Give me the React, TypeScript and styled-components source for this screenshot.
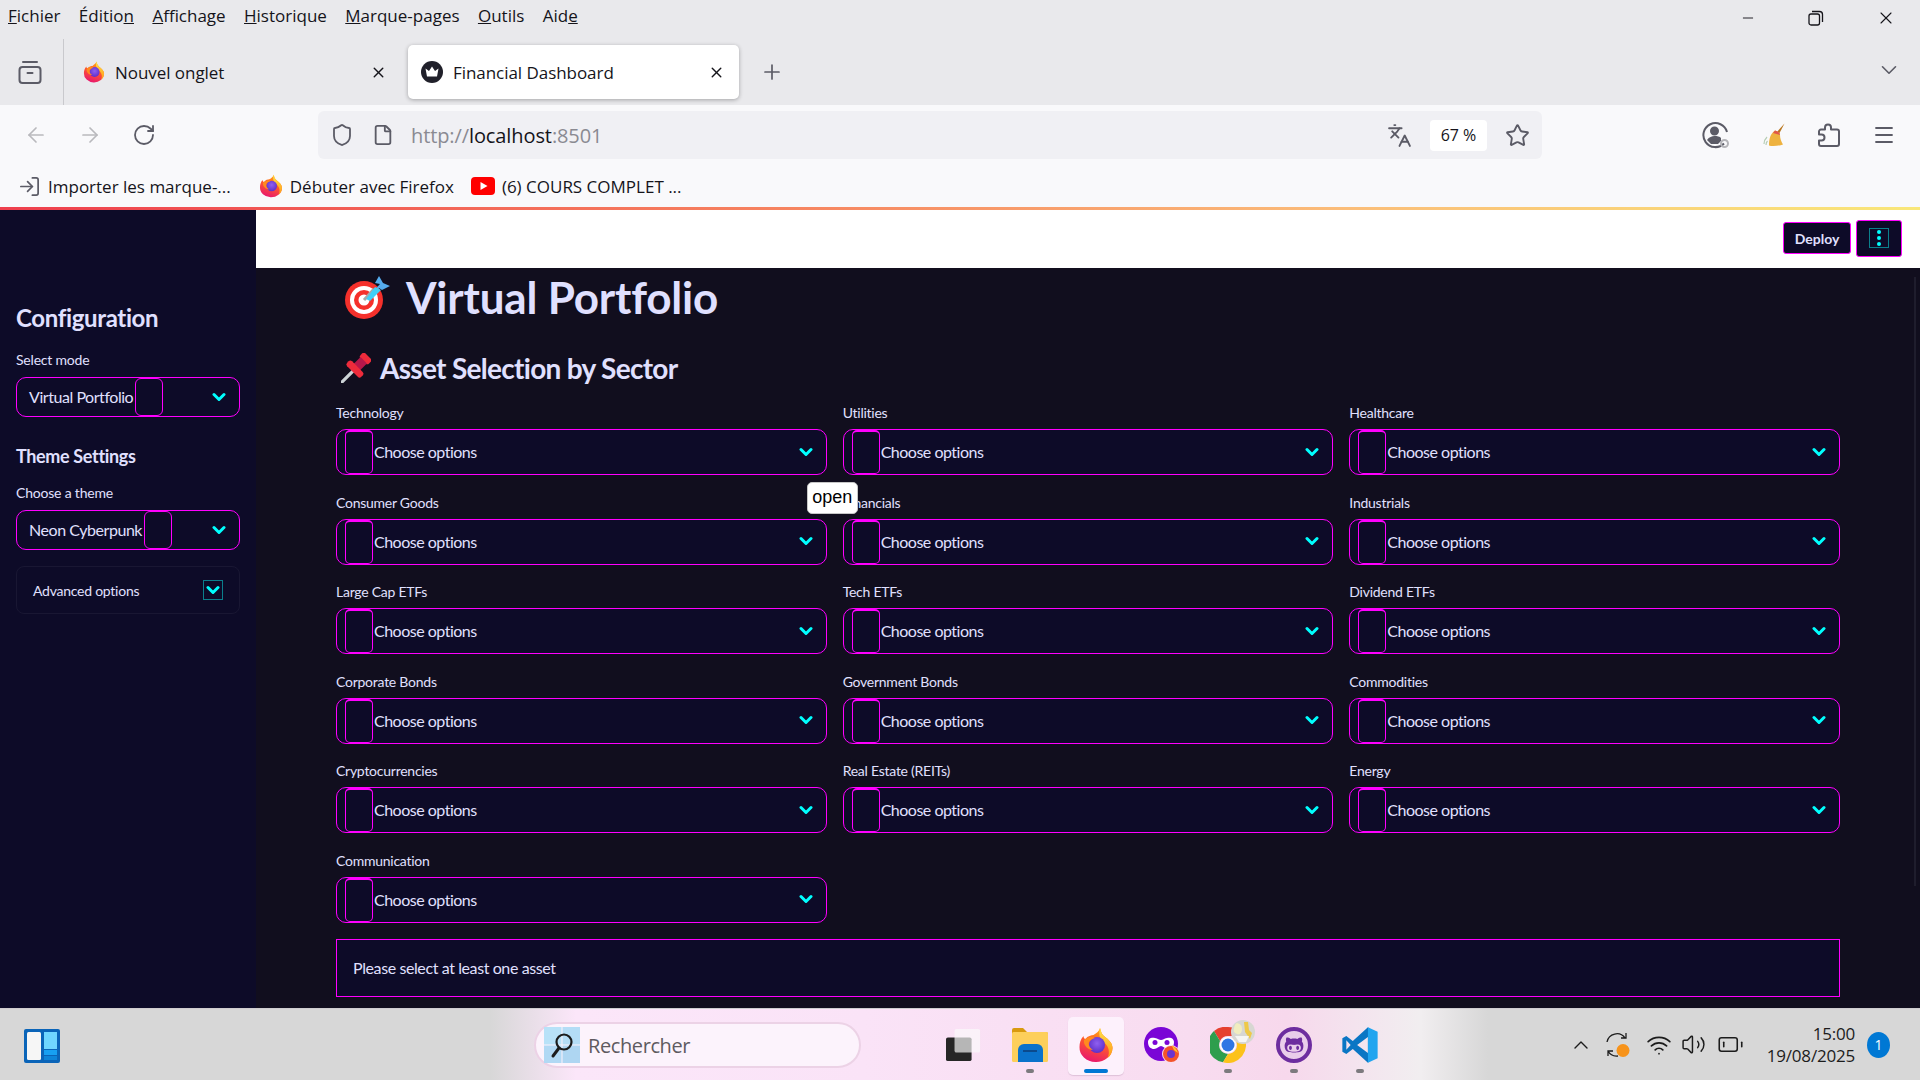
import React from 'react';
import styled, { createGlobalStyle } from 'styled-components';
import {
  ArrowLeft,
  ArrowRight,
  BatteryLow,
  ChevronDown,
  ChevronUp,
  File,
  Languages,
  LogIn,
  Menu,
  Minus,
  Plus,
  RotateCw,
  Shield,
  Star,
  Volume2,
  Wifi,
  X,
} from 'lucide-react';
import { FaGithubAlt } from 'react-icons/fa';

const SECTORS = [
  'Technology',
  'Utilities',
  'Healthcare',
  'Consumer Goods',
  'Financials',
  'Industrials',
  'Large Cap ETFs',
  'Tech ETFs',
  'Dividend ETFs',
  'Corporate Bonds',
  'Government Bonds',
  'Commodities',
  'Cryptocurrencies',
  'Real Estate (REITs)',
  'Energy',
  'Communication',
];

const MENU: [string, string, string][] = [
  ['', 'F', 'ichier'],
  ['Éditio', 'n', ''],
  ['', 'A', 'ffichage'],
  ['', 'H', 'istorique'],
  ['', 'M', 'arque-pages'],
  ['', 'O', 'utils'],
  ['Aid', 'e', ''],
];

const GlobalStyle = createGlobalStyle`
  html, body {
    margin: 0;
    padding: 0;
    overflow: hidden;
    background: #110e1e;
  }
`;

const Page = styled.div`
  width: 1920px;
  height: 1080px;
  display: flex;
  flex-direction: column;
  overflow: hidden;
  font-family: 'Open Sans', 'Noto Sans', sans-serif;
  color: #15141a;
`;

const MenuBar = styled.div`
  height: 33px;
  flex: none;
  box-sizing: border-box;
  display: flex;
  align-items: center;
  padding: 0 24px 2px 8px;
  background: #e9e9ec;
  font-size: 17px;
  gap: 18.4px;
`;

const MenuItem = styled.span`
  white-space: nowrap;
`;

const WindowButtons = styled.div`
  margin-left: auto;
  display: flex;
  align-items: center;
  gap: 52px;
  padding-top: 5px;
`;

const TabStrip = styled.div`
  height: 72px;
  flex: none;
  box-sizing: border-box;
  display: flex;
  align-items: flex-start;
  background: #e9e9ec;
  padding: 12px 18px 0 18px;
`;

const ArchiveSlot = styled.div`
  width: 24px;
  height: 24px;
  margin-top: 15px;
`;

const TabDivider = styled.div`
  width: 1px;
  height: 66px;
  margin: -6px 6px 0 21px;
  background: #c9c9cd;
`;

const Tab = styled.div<{ $active?: boolean }>`
  width: 331px;
  height: 54px;
  box-sizing: border-box;
  display: flex;
  align-items: center;
  gap: 10px;
  padding: 0 14px 0 13px;
  border-radius: 5px;
  font-size: 17px;
  letter-spacing: -0.05px;
  margin-right: 7px;
  background: ${({ $active }) => ($active ? '#ffffff' : 'transparent')};
  box-shadow: ${({ $active }) => ($active ? '0 1px 4px rgba(0,0,0,.3)' : 'none')};
`;

const TabTitle = styled.span`
  flex: 1;
  white-space: nowrap;
`;

const NewTab = styled.div`
  margin: 15px 0 0 14px;
  display: flex;
  color: #5b5b66;
`;

const TabsMenu = styled.div`
  margin: 12px 0 0 auto;
  display: flex;
  color: #5b5b66;
`;

const NavBar = styled.div`
  height: 60px;
  flex: none;
  box-sizing: border-box;
  display: flex;
  align-items: center;
  background: #f9f9fb;
  padding: 0 24px;
  color: #5b5b66;
`;

const NavButtons = styled.div`
  display: flex;
  align-items: center;
  gap: 30px;
  width: 294px;
`;

const NavIcon = styled.div<{ $disabled?: boolean }>`
  display: flex;
  color: ${({ $disabled }) => ($disabled ? '#b9b9bd' : '#5b5b66')};
`;

const UrlBar = styled.div`
  width: 1224px;
  height: 48px;
  box-sizing: border-box;
  display: flex;
  align-items: center;
  padding: 0 12px;
  border-radius: 6px;
  background: #f0f0f4;
  gap: 18px;
`;

const UrlText = styled.div`
  flex: 1;
  font-size: 20px;
  letter-spacing: -0.1px;
  color: #8a8a92;
  margin-left: -1px;
`;

const UrlHost = styled.span`
  color: #15141a;
`;

const ZoomPill = styled.div`
  width: 57px;
  height: 31px;
  display: flex;
  align-items: center;
  justify-content: center;
  background: #fff;
  border-radius: 4px;
  font-size: 16px;
  color: #15141a;
`;

const ToolIcons = styled.div`
  margin-left: auto;
  display: flex;
  align-items: center;
  gap: 32px;
`;

const Bookmarks = styled.div`
  height: 42px;
  flex: none;
  box-sizing: border-box;
  display: flex;
  align-items: center;
  background: #f9f9fb;
  padding: 0 0 0 18px;
  font-size: 17px;
  letter-spacing: 0;
`;

const Bookmark = styled.div<{ $after?: number }>`
  display: flex;
  align-items: center;
  gap: 7px;
  margin-right: ${({ $after }) => $after ?? 0}px;
  white-space: nowrap;
`;

const ColorLine = styled.div`
  height: 3px;
  flex: none;
  background: linear-gradient(90deg, #ee3f4d 0%, #f6825f 40%, #fbbd79 70%, #f9e779 100%);
`;

const Content = styled.div`
  flex: 1;
  min-height: 0;
  display: flex;
  font-family: Lato, 'Noto Sans', sans-serif;
  color: #e0e0ff;
`;

const Sidebar = styled.aside`
  width: 256px;
  flex: none;
  box-sizing: border-box;
  background: #0d0b28;
  padding: 92px 16px 0;
`;

const SideTitle = styled.h2`
  margin: 0;
  font-size: 24px;
  line-height: 32px;
  font-weight: 700;
  letter-spacing: -0.35px;
`;

const SideHeading = styled.h3`
  margin: 26px 0 13px;
  font-size: 18px;
  line-height: 26px;
  font-weight: 700;
  letter-spacing: -0.35px;
`;

const SideLabel = styled.div<{ $top?: number }>`
  font-size: 14px;
  line-height: 22px;
  height: 23px;
  letter-spacing: -0.2px;
  margin: ${({ $top }) => $top ?? 0}px 0 5px;
`;

const SideSelect = styled.div`
  height: 40px;
  box-sizing: border-box;
  display: flex;
  align-items: stretch;
  border: 1px solid #ff00ff;
  border-radius: 10px;
  padding-left: 12px;
  padding-right: 13px;
  font-size: 16px;
  letter-spacing: -0.45px;
  white-space: nowrap;
`;

const SelectValue = styled.span`
  align-self: center;
  margin-top: -1px;
`;

const InnerBox = styled.span`
  width: 28px;
  box-sizing: border-box;
  border: 1px solid #ff00ff;
  border-radius: 6px;
  margin-left: 2px;
  flex: none;
`;

const Arrow = styled.span`
  margin-left: auto;
  align-self: center;
  display: flex;
  color: #00ffff;
  margin-top: -1px;
`;

const Advanced = styled.div`
  margin-top: 16px;
  height: 48px;
  box-sizing: border-box;
  display: flex;
  align-items: center;
  justify-content: space-between;
  padding: 0 16px;
  border: 1px solid #191733;
  border-radius: 8px;
  font-size: 14px;
  letter-spacing: -0.25px;
`;

const AdvancedToggle = styled.span`
  width: 20px;
  height: 20px;
  box-sizing: border-box;
  display: flex;
  align-items: center;
  justify-content: center;
  border: 1px solid #0b7f8c;
  color: #00ffff;
`;

const Main = styled.main`
  flex: 1;
  min-width: 0;
  display: flex;
  flex-direction: column;
  position: relative;
  background: #110e1e;
`;

const Header = styled.header`
  height: 58px;
  flex: none;
  box-sizing: border-box;
  display: flex;
  align-items: center;
  justify-content: flex-end;
  gap: 5px;
  padding: 0 18px 2px 0;
  background: #fff;
`;

const DeployButton = styled.button`
  width: 68px;
  height: 32px;
  box-sizing: border-box;
  border: 1px solid #ff00ff;
  border-radius: 3px;
  background: #0d0b28;
  color: #e0e0ff;
  font: 700 14px Lato, sans-serif;
  padding: 0;
`;

const KebabButton = styled.button`
  width: 46px;
  height: 37px;
  box-sizing: border-box;
  border: 1px solid #ff00ff;
  border-radius: 3px;
  background: #0d0b28;
  display: flex;
  align-items: center;
  justify-content: center;
  padding: 0;
`;

const KebabInner = styled.span`
  width: 20px;
  height: 20px;
  box-sizing: border-box;
  display: flex;
  flex-direction: column;
  align-items: center;
  justify-content: center;
  gap: 2px;
  border: 1px solid #0b7f8c;
`;

const KebabDot = styled.i`
  width: 4px;
  height: 4px;
  border-radius: 50%;
  background: #00ffff;
`;

const Body = styled.div`
  padding: 0 80px;
`;

const TitleRow = styled.div`
  height: 58px;
  box-sizing: border-box;
  display: flex;
  align-items: center;
  gap: 15px;
  padding: 0 0 1px 9px;
`;

const Title = styled.h1`
  margin: 0;
  font-size: 44px;
  font-weight: 700;
  letter-spacing: -0.2px;
  white-space: nowrap;
`;

const SectionRow = styled.div`
  height: 40px;
  margin-top: 22px;
  display: flex;
  align-items: center;
  gap: 9px;
  padding-left: 5px;
`;

const SectionTitle = styled.h2`
  margin: 0;
  font-size: 28px;
  font-weight: 700;
  letter-spacing: -0.7px;
  white-space: nowrap;
`;

const AssetGrid = styled.div`
  margin-top: 14px;
  display: grid;
  grid-template-columns: repeat(3, 1fr);
  column-gap: 16px;
  row-gap: 16.6px;
`;

const Field = styled.div`
  position: relative;
`;

const FieldLabel = styled.div`
  height: 27px;
  line-height: 21px;
  font-size: 14px;
  letter-spacing: -0.25px;
`;

const MultiSelect = styled.div`
  height: 46px;
  box-sizing: border-box;
  display: flex;
  align-items: stretch;
  padding: 0 13px 0 8px;
  border: 1px solid #ff00ff;
  border-radius: 10px;
  background: #0d0b28;
  font-size: 16px;
  letter-spacing: -0.5px;
`;

const GhostBox = styled.span`
  width: 28px;
  flex: none;
  box-sizing: border-box;
  border: 1px solid #ff00ff;
  border-top-width: 2px;
  border-radius: 5px;
`;

const Placeholder = styled.span`
  align-self: center;
  margin: -1px 0 0 1px;
`;

const Tooltip = styled.div`
  position: absolute;
  left: -36px;
  top: -10px;
  width: 51px;
  height: 32px;
  box-sizing: border-box;
  display: flex;
  align-items: center;
  justify-content: center;
  background: #fff;
  border: 1px solid #c6c6c6;
  border-radius: 5px;
  color: #000;
  font: 18px 'Liberation Sans', sans-serif;
`;

const Alert = styled.div`
  margin-top: 16px;
  height: 58px;
  box-sizing: border-box;
  display: flex;
  align-items: center;
  padding-left: 16px;
  border: 1px solid #ff00ff;
  background: #0d0b28;
  font-size: 16px;
  letter-spacing: -0.4px;
`;

const Scrollbar = styled.div`
  position: absolute;
  right: 4px;
  top: 67px;
  width: 2px;
  height: 609px;
  background: #1f1d2d;
`;

const Taskbar = styled.footer`
  height: 72px;
  flex: none;
  box-sizing: border-box;
  display: flex;
  align-items: flex-start;
  padding: 0 30px 0 24px;
  border-top: 1px solid #cfcdd0;
  background: linear-gradient(
    90deg,
    #d7d7d7 0%,
    #d7d7d7 25.5%,
    #fbe6f9 30%,
    #fae3f7 45%,
    #f8dcf0 62%,
    #f7d8ec 67%,
    #f1eef0 74%,
    #d7d7d7 77.5%,
    #d7d7d7 100%
  );
  font-family: 'Open Sans', sans-serif;
`;

const StartSlot = styled.div`
  width: 36px;
  height: 34px;
  margin-top: 20px;
`;

const SearchBox = styled.div`
  width: 327px;
  height: 46px;
  margin: 13px 70px 0 474px;
  box-sizing: border-box;
  display: flex;
  align-items: center;
  gap: 8px;
  padding-left: 8px;
  border: 2px solid #ecd2e6;
  border-radius: 23px;
  background: #fcf3fc;
  font-size: 20px;
  letter-spacing: -0.4px;
  color: #5e5a60;
`;

const TaskSlot = styled.div<{ $active?: boolean }>`
  position: relative;
  width: 66px;
  height: 71px;
  display: flex;
  flex-direction: column;
  align-items: center;
  padding-top: 18px;
  box-sizing: border-box;

  &::before {
    content: '';
    position: absolute;
    left: 5px;
    right: 5px;
    top: 8px;
    bottom: 5px;
    border-radius: 5px;
    background: ${({ $active }) => ($active ? '#fdf1fc' : 'transparent')};
    box-shadow: ${({ $active }) => ($active ? '0 1px 1px rgba(120,80,120,.2)' : 'none')};
  }
`;

const TaskIcon = styled.div`
  position: relative;
  width: 36px;
  height: 36px;
  display: flex;
  align-items: center;
  justify-content: center;
`;

const TaskDot = styled.div<{ $active?: boolean; $off?: boolean }>`
  position: relative;
  margin-top: 6px;
  width: ${({ $active }) => ($active ? 24 : 8)}px;
  height: 4px;
  border-radius: 2px;
  background: ${({ $active, $off }) => ($off ? 'transparent' : $active ? '#0078d4' : '#7c7a7e')};
`;

const GithubCircle = styled.div`
  width: 36px;
  height: 36px;
  box-sizing: border-box;
  border-radius: 50%;
  border: 4px solid #6d2d9f;
  background: #e9cdea;
  color: #6d2d9f;
  display: flex;
  align-items: center;
  justify-content: center;
`;

const OverlayBlob = styled.div`
  position: absolute;
  right: -9px;
  top: -7px;
`;

const Tray = styled.div`
  margin-left: auto;
  height: 71px;
  display: flex;
  align-items: center;
  gap: 11px;
  color: #1c1c1c;
`;

const TrayIcon = styled.span<{ $shift?: number }>`
  display: flex;
  margin-left: ${({ $shift }) => $shift ?? 0}px;
`;

const Clock = styled.div`
  margin-left: 12px;
  text-align: right;
  font-size: 17px;
  line-height: 22px;
  letter-spacing: -0.2px;
  white-space: nowrap;
`;

const Badge = styled.div`
  width: 23px;
  height: 26px;
  margin-left: 1px;
  border-radius: 50%;
  background: #0078d4;
  color: #fff;
  font-size: 14px;
  display: flex;
  align-items: center;
  justify-content: center;
`;

const Chevron = () => (
  <svg width="14" height="10" viewBox="0 0 14 10" fill="none" stroke="currentColor" strokeWidth="3" strokeLinecap="round" strokeLinejoin="round">
    <path d="M2 2.500 7 7.500 12 2.500" />
  </svg>
);

const RestoreIcon = () => (
  <svg width="16" height="16" viewBox="0 0 16 16" fill="none" stroke="#15141a" strokeWidth="1.3">
    <rect x="1" y="4" width="10.5" height="11" rx="2" />
    <path d="M4 1.500h7.500A3 3 0 0 1 14.500 4.500V12" />
  </svg>
);

const ArchiveIcon = () => (
  <svg width="24" height="24" viewBox="0 0 24 24" fill="none" stroke="#5b5b66" strokeWidth="2" strokeLinecap="round">
    <rect x="1.500" y="7" width="21" height="16" rx="3" />
    <path d="M5 2h14M9.500 13h5" />
  </svg>
);

const FirefoxIcon = ({ size = 24 }: { size?: number }) => (
  <svg width={size} height={size} viewBox="0 0 36 36">
    <defs>
      <linearGradient id="ffBase" x1="0.7" y1="0" x2="0.35" y2="1">
        <stop offset="0" stopColor="#ffb30f" />
        <stop offset="0.45" stopColor="#ff5a2b" />
        <stop offset="1" stopColor="#e8166f" />
      </linearGradient>
      <linearGradient id="ffFlame" x1="0.5" y1="0" x2="0.5" y2="1">
        <stop offset="0" stopColor="#ffe14a" />
        <stop offset="1" stopColor="#ff9a16" />
      </linearGradient>
      <radialGradient id="ffGlobe" cx="0.5" cy="0.4" r="0.65">
        <stop offset="0" stopColor="#8f60f0" />
        <stop offset="1" stopColor="#5a2bc4" />
      </radialGradient>
    </defs>
    <path d="M22 1c1 3 1 5 4 8 5 4 8.500 7 8.500 12A16.500 14.500 0 0 1 1.500 20c0-4 1-8 4-11 0 2 1 3 2 3 2-3 6-4 8-4 3-2 6-4 6.500-7Z" fill="url(#ffBase)" />
    <path d="M22 1c1 3 1 5 4 8 5 4 8.500 7 8.500 12 0 4-2 8-5 10 2-4 2-9-1-13-2-3-6-5-7-9-.5-3 0-6 .5-8Z" fill="url(#ffFlame)" />
    <circle cx="19" cy="18" r="8" fill="url(#ffGlobe)" />
    <path d="M6 13c3-3 8-4 11-2-3 1-5 2-6 4-1 3 1 6 4 8-5 0-10-5-9-10Z" fill="#ff8a1f" />
  </svg>
);

const CrownIcon = () => (
  <svg width="22" height="22" viewBox="0 0 22 22">
    <circle cx="11" cy="11" r="11" fill="#20202a" />
    <path d="M4.500 7.500 8 10l3-4.500L14 10l3.500-2.500-1.500 8H6Z" fill="#fff" />
  </svg>
);

const YoutubeIcon = () => (
  <svg width="24" height="18" viewBox="0 0 24 18">
    <rect width="24" height="18" rx="4" fill="#f00" />
    <path d="M9.500 5v8l7-4Z" fill="#fff" />
  </svg>
);

const AccountIcon = () => (
  <svg width="28" height="28" viewBox="0 0 28 28" fill="none" stroke="#5b5b66" strokeWidth="2">
    <path d="M22 22.500A12 12 0 1 1 25 11" />
    <circle cx="12.500" cy="10" r="3.500" fill="#5b5b66" />
    <path d="M5 19c2-3 5-4 7.500-4S18 15.500 19 17v3l-3 3H9Z" fill="#5b5b66" stroke="none" />
    <circle cx="22.500" cy="22.500" r="3.500" stroke="#b4b4b8" />
  </svg>
);

const BroomIcon = () => (
  <svg width="24" height="24" viewBox="0 0 24 24">
    <path d="M22.500 0.500 15 9l2 2Z" fill="#b9761f" />
    <path d="M13 7.500c3 .5 5 2.500 5 4.500 0 4 1.500 7 3 9.500-4 1.500-11 2-14 1 0-7 1.500-12 6-15Z" fill="#eeb23f" />
    <path d="M13 7.500c3 .5 5 2.500 5 4.500l-7-2Z" fill="#e0574a" />
    <path d="M2 21c0-3 1-5 3-7M4 22c0-2 .5-3 1.500-4" stroke="#b6cdb4" strokeWidth="1.200" fill="none" />
  </svg>
);

const PuzzleOutline = () => (
  <svg width="22" height="24" viewBox="0 0 22 24" fill="none" stroke="#5b5b66" strokeWidth="2" strokeLinejoin="round">
    <path d="M10 1.500c2 0 3 1.500 3 3V6.500h6a2 2 0 0 1 2 2V21a2 2 0 0 1-2 2H3a2 2 0 0 1-2-2v-3.500h2.500a3 3 0 0 0 0-6H1V8.500a2 2 0 0 1 2-2h4V4.500c0-1.500 1-3 3-3Z" />
  </svg>
);

const TargetIcon = () => (
  <svg width="46" height="44" viewBox="0 0 46 44">
    <circle cx="19" cy="25" r="19" fill="#f5302b" />
    <circle cx="19" cy="25" r="14" fill="#fff" />
    <circle cx="19" cy="25" r="10" fill="#f5302b" />
    <circle cx="19" cy="25" r="5.500" fill="#fff" />
    <path d="M19 25 29 14" stroke="#a8a8a8" strokeWidth="3" />
    <path d="M24 21 35 9l-5-1 4-7 4 7 7 3-8 4-3-2-8 10Z" fill="#55acee" />
    <path d="M21 24 30 12l6 3-11 11Z" fill="#3fd0f7" />
  </svg>
);

const PinIcon = () => (
  <svg width="30" height="30" viewBox="0 0 30 30">
    <g transform="rotate(45 15 15)">
      <path d="M15 19V37" stroke="#ccd3d6" strokeWidth="3.200" strokeLinecap="round" />
      <rect x="9" y="-2" width="12" height="7" rx="2.500" fill="#ee2b3b" />
      <rect x="10.500" y="4" width="9" height="10" fill="#b5174a" />
      <rect x="5" y="13" width="20" height="7" rx="2.500" fill="#ee2b3b" />
    </g>
  </svg>
);

const StartIcon = () => (
  <svg width="36" height="34" viewBox="0 0 36 34">
    <rect width="36" height="34" rx="2" fill="#0a64b8" />
    <rect x="3" y="3" width="14" height="28" rx="1.500" fill="#f6f6f6" />
    <rect x="20" y="3" width="13" height="17" fill="#6fd6ff" />
    <rect x="20" y="21" width="13" height="5" fill="#17a0f2" />
    <rect x="20" y="27" width="13" height="4" fill="#0d84d8" />
  </svg>
);

const SearchIcon = () => (
  <svg width="36" height="36" viewBox="0 0 36 36">
    <rect width="17.500" height="17.500" fill="#b8e2f8" />
    <rect x="18.500" width="17.500" height="17.500" fill="#b4ddf6" />
    <rect y="18.500" width="17.500" height="17.500" fill="#b1d9f4" />
    <rect x="18.500" y="18.500" width="17.500" height="17.500" fill="#aed6f2" />
    <circle cx="20" cy="15" r="7.500" fill="none" stroke="#1c1c1c" strokeWidth="2.200" />
    <path d="M15 21 9 29" stroke="#1c1c1c" strokeWidth="3" strokeLinecap="round" />
  </svg>
);

const TaskViewIcon = () => (
  <svg width="38" height="34" viewBox="0 0 38 34">
    <rect x="0" y="9" width="27" height="25" rx="2" fill="#262626" />
    <rect x="9" y="0" width="27" height="25" rx="2" fill="#fafafa" fillOpacity="0.68" />
  </svg>
);

const FolderIcon = () => (
  <svg width="36" height="34" viewBox="0 0 36 34">
    <path d="M0 2a2 2 0 0 1 2-2h9l4 4h19a2 2 0 0 1 2 2v4H0Z" fill="#d99a0f" />
    <rect y="4" width="36" height="30" rx="1.500" fill="#fdcf5b" />
    <path d="M6 34v-12a6 6 0 0 1 6-6h13a6 6 0 0 1 6 6v12Z" fill="#0a72cb" />
    <path d="M11 23h14" stroke="#0b4a8c" strokeWidth="2" />
  </svg>
);

const MaskIcon = () => (
  <svg width="36" height="36" viewBox="0 0 36 36">
    <circle cx="17" cy="17" r="17" fill="#7a06d6" />
    <path d="M4 15c0-4 4-5 7-4 3 .5 4 2 6 2s3-1.500 6-2c3-1 7 0 7 4 0 5-3 7-6 7-3 0-5-3-7-3s-4 3-7 3c-3 0-6-2-6-7Z" fill="#fff" />
    <circle cx="11" cy="15.500" r="2.500" fill="#7a06d6" />
    <circle cx="23" cy="15.500" r="2.500" fill="#7a06d6" />
    <circle cx="27" cy="27" r="9" fill="#f8dcf0" />
    <circle cx="27" cy="27" r="8" fill="#f4542a" />
    <circle cx="27" cy="27" r="4" fill="#6a35d0" />
    <path d="M28 18c2 2 5 4 6 8-3-2-5-3-6-8Z" fill="#ffc02a" />
  </svg>
);

const ChromeIcon = () => (
  <svg width="36" height="36" viewBox="0 0 36 36">
    <path d="M18 0A18 18 0 0 1 33.600 9H18a9 9 0 0 0-8 5L4 4A18 18 0 0 1 18 0Z" fill="#e5402f" />
    <path d="M4 4 10 14a9 9 0 0 0 8 13L13 35.300A18 18 0 0 1 4 4Z" fill="#2e9e4d" />
    <path d="M33.600 9A18 18 0 0 1 13 35.300L18 27a9 9 0 0 0 8-13l-2-5Z" fill="#fcc21b" />
    <circle cx="18" cy="18" r="8" fill="#fff" />
    <circle cx="18" cy="18" r="6.500" fill="#2f76e4" />
  </svg>
);

const ChromeBlob = () => (
  <svg width="24" height="24" viewBox="0 0 24 24">
    <circle cx="12" cy="12" r="12" fill="#d7d7d2" />
    <path d="M6 3c3 1 5 2 5 6s-2 6-5 5-4-3-3-6 1-4 3-5Z" fill="#f1edbf" />
    <path d="M13 2h4l1 8 3 3-2 6-5-7Z" fill="#eec948" />
    <path d="M4 16h14l-3 6H8Z" fill="#f6f6f4" />
  </svg>
);

const VsCodeIcon = () => (
  <svg width="38" height="38" viewBox="0 0 100 100">
    <path fillRule="evenodd" d="M72 1 30 39 12 25 1 31V69l11 6 18-14 42 38 5-6V7ZM72 28 42 50 72 72ZM12 37V63L24 50Z" fill="#0a76c4" />
    <path d="M72 1 99 13V87L72 99Z" fill="#21a5ef" />
  </svg>
);

const SyncIcon = () => (
  <svg width="26" height="26" viewBox="0 0 26 26" fill="none" stroke="#1c1c1c" strokeWidth="1.300">
    <path d="M3 10A10 10 0 0 1 21 6M22 1v5h-5M4 24v-5h5M4 19a10 10 0 0 0 10 5" />
    <circle cx="19" cy="18.500" r="6.500" fill="#f7931a" stroke="none" />
  </svg>
);

const Assets = () => (
  <AssetGrid>
    {SECTORS.map((sector) => (
      <Field key={sector}>
        <FieldLabel>{sector}</FieldLabel>
        <MultiSelect>
          <GhostBox />
          <Placeholder>Choose options</Placeholder>
          <Arrow>
            <Chevron />
          </Arrow>
        </MultiSelect>
        {sector === 'Financials' && <Tooltip>open</Tooltip>}
      </Field>
    ))}
  </AssetGrid>
);

export default function App() {
  return (
    <Page>
      <GlobalStyle />
      <MenuBar>
        {MENU.map(([before, key, after]) => (
          <MenuItem key={before + key + after}>
            {before}
            <u>{key}</u>
            {after}
          </MenuItem>
        ))}
        <WindowButtons>
          <Minus size={16} color="#15141a" strokeWidth={1.4} />
          <RestoreIcon />
          <X size={20} color="#15141a" strokeWidth={1.3} />
        </WindowButtons>
      </MenuBar>
      <TabStrip>
        <ArchiveSlot>
          <ArchiveIcon />
        </ArchiveSlot>
        <TabDivider />
        <Tab>
          <FirefoxIcon size={22} />
          <TabTitle>Nouvel onglet</TabTitle>
          <X size={17} color="#15141a" strokeWidth={2} />
        </Tab>
        <Tab $active>
          <CrownIcon />
          <TabTitle>Financial Dashboard</TabTitle>
          <X size={17} color="#15141a" strokeWidth={2} />
        </Tab>
        <NewTab>
          <Plus size={24} strokeWidth={1.7} />
        </NewTab>
        <TabsMenu>
          <ChevronDown size={26} strokeWidth={1.5} />
        </TabsMenu>
      </TabStrip>
      <NavBar>
        <NavButtons>
          <NavIcon $disabled>
            <ArrowLeft size={24} strokeWidth={1.7} />
          </NavIcon>
          <NavIcon $disabled>
            <ArrowRight size={24} strokeWidth={1.7} />
          </NavIcon>
          <NavIcon>
            <RotateCw size={24} strokeWidth={1.8} />
          </NavIcon>
        </NavButtons>
        <UrlBar>
          <Shield size={24} strokeWidth={1.8} />
          <File size={22} strokeWidth={2} />
          <UrlText>
            http://<UrlHost>localhost</UrlHost>:8501
          </UrlText>
          <Languages size={25} strokeWidth={1.8} />
          <ZoomPill>67 %</ZoomPill>
          <Star size={25} strokeWidth={1.8} />
        </UrlBar>
        <ToolIcons>
          <AccountIcon />
          <BroomIcon />
          <PuzzleOutline />
          <Menu size={24} strokeWidth={1.8} />
        </ToolIcons>
      </NavBar>
      <Bookmarks>
        <Bookmark $after={28}>
          <LogIn size={23} color="#5b5b66" strokeWidth={1.8} />
          Importer les marque-...
        </Bookmark>
        <Bookmark $after={17}>
          <FirefoxIcon />
          Débuter avec Firefox
        </Bookmark>
        <Bookmark>
          <YoutubeIcon />
          (6) COURS COMPLET ...
        </Bookmark>
      </Bookmarks>
      <ColorLine />
      <Content>
        <Sidebar>
          <SideTitle>Configuration</SideTitle>
          <SideLabel $top={15}>Select mode</SideLabel>
          <SideSelect>
            <SelectValue>Virtual Portfolio</SelectValue>
            <InnerBox />
            <Arrow>
              <Chevron />
            </Arrow>
          </SideSelect>
          <SideHeading>Theme Settings</SideHeading>
          <SideLabel>Choose a theme</SideLabel>
          <SideSelect>
            <SelectValue>Neon Cyberpunk</SelectValue>
            <InnerBox />
            <Arrow>
              <Chevron />
            </Arrow>
          </SideSelect>
          <Advanced>
            Advanced options
            <AdvancedToggle>
              <Chevron />
            </AdvancedToggle>
          </Advanced>
        </Sidebar>
        <Main>
          <Header>
            <DeployButton>Deploy</DeployButton>
            <KebabButton>
              <KebabInner>
                <KebabDot />
                <KebabDot />
                <KebabDot />
              </KebabInner>
            </KebabButton>
          </Header>
          <Body>
            <TitleRow>
              <TargetIcon />
              <Title>Virtual Portfolio</Title>
            </TitleRow>
            <SectionRow>
              <PinIcon />
              <SectionTitle>Asset Selection by Sector</SectionTitle>
            </SectionRow>
            <Assets />
            <Alert>Please select at least one asset</Alert>
          </Body>
          <Scrollbar />
        </Main>
      </Content>
      <Taskbar>
        <StartSlot>
          <StartIcon />
        </StartSlot>
        <SearchBox>
          <SearchIcon />
          Rechercher
        </SearchBox>
        <TaskSlot>
          <TaskIcon>
            <TaskViewIcon />
          </TaskIcon>
          <TaskDot $off />
        </TaskSlot>
        <TaskSlot>
          <TaskIcon>
            <FolderIcon />
          </TaskIcon>
          <TaskDot />
        </TaskSlot>
        <TaskSlot $active>
          <TaskIcon>
            <FirefoxIcon size={36} />
          </TaskIcon>
          <TaskDot $active />
        </TaskSlot>
        <TaskSlot>
          <TaskIcon>
            <MaskIcon />
          </TaskIcon>
          <TaskDot $off />
        </TaskSlot>
        <TaskSlot>
          <TaskIcon>
            <ChromeIcon />
            <OverlayBlob>
              <ChromeBlob />
            </OverlayBlob>
          </TaskIcon>
          <TaskDot />
        </TaskSlot>
        <TaskSlot>
          <TaskIcon>
            <GithubCircle>
              <FaGithubAlt size={20} />
            </GithubCircle>
          </TaskIcon>
          <TaskDot />
        </TaskSlot>
        <TaskSlot>
          <TaskIcon>
            <VsCodeIcon />
          </TaskIcon>
          <TaskDot />
        </TaskSlot>
        <Tray>
          <ChevronUp size={24} strokeWidth={1.4} />
          <SyncIcon />
          <TrayIcon $shift={5}>
            <Wifi size={26} strokeWidth={1.6} />
          </TrayIcon>
          <TrayIcon $shift={-2}>
            <Volume2 size={25} strokeWidth={1.4} />
          </TrayIcon>
          <BatteryLow size={27} strokeWidth={1.4} />
          <Clock>
            15:00
            <br />
            19/08/2025
          </Clock>
          <Badge>1</Badge>
        </Tray>
      </Taskbar>
    </Page>
  );
}
